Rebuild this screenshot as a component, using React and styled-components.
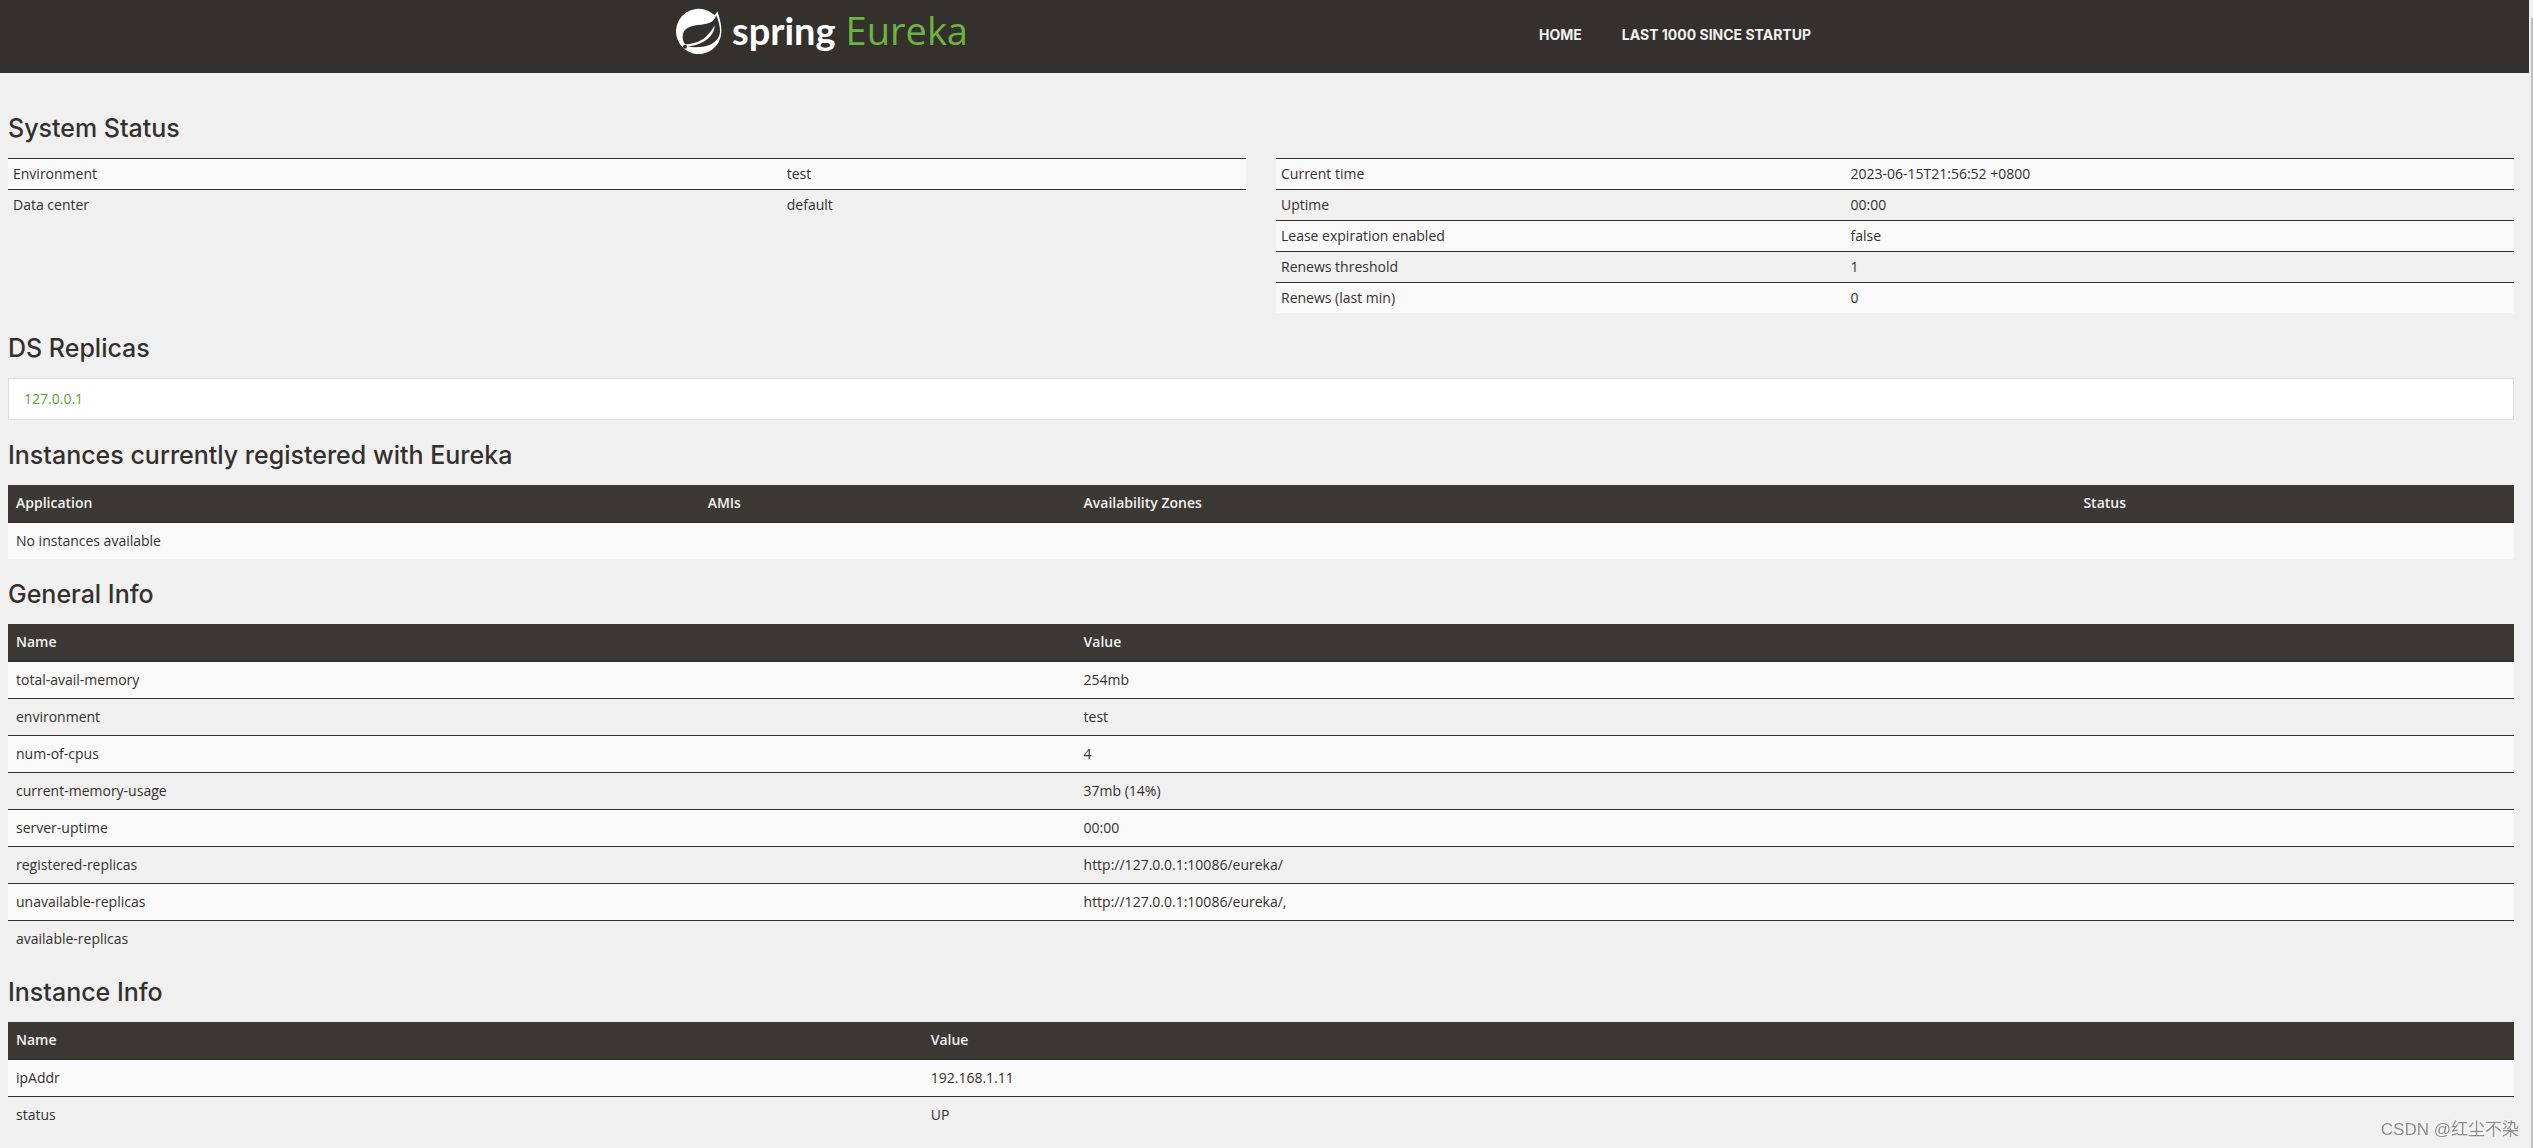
import React from "react";
import styled, { createGlobalStyle } from "styled-components";

const GlobalStyle = createGlobalStyle`
  body {
    margin: 0;
    color: #34302d;
    background: #f0f0f0;
    font: 14px/20px "Open Sans", "Noto Sans", sans-serif;
  }
`;
const Layout = styled.div`
  display: flex;
  min-height: 100vh;
`;
const Page = styled.div`
  flex: 1;
  min-width: 0;
`;
const ScrollRail = styled.div`
  display: flex;
  box-sizing: border-box;
  width: 4px;
  padding: 18px 0 0 2px;
`;
const ScrollThumb = styled.div`
  flex: 1;
  background: #bfbfbf;
`;
const Header = styled.header`
  padding: 0 16px 0 9px;
  background: #34302d;
`;
const HeaderInner = styled.div`
  display: flex;
  justify-content: space-between;
  box-sizing: border-box;
  max-width: 1170px;
  height: 73px;
  margin: 0 auto;
  padding-right: 15px;
`;
const Brand = styled.a`
  display: flex;
  align-items: flex-start;
  padding-top: 8px;
  color: #fff;
  text-decoration: none;
  svg {
    width: 48px;
    height: 48px;
  }
`;
const BrandText = styled.span`
  display: flex;
  align-items: baseline;
  gap: 10px;
  margin-left: 8px;
  line-height: 44px;
`;
const Spring = styled.strong`
  font: bold 38px/44px Lato, sans-serif;
`;
const Eureka = styled.span`
  color: #6db33f;
  font: 38px/44px "Open Sans", sans-serif;
`;
const Nav = styled.nav`
  display: flex;
  a {
    padding: 25px 20px;
    color: #f1f1f1;
    font: bold 14px/20px Inter, sans-serif;
    text-decoration: none;
    text-transform: uppercase;
  }
`;
const Content = styled.main`
  padding: 20px 15px 15px 8px;
`;
const Title = styled.h1`
  margin: 0;
  padding: 23px 0 17px;
  font: 500 25px/25px Inter, sans-serif;
`;
const Columns = styled.div`
  display: grid;
  grid-template-columns: 1fr 1fr;
  gap: 30px;
  align-items: start;
`;
const Table = styled.table`
  width: 100%;
  border-collapse: separate;
  border-spacing: 0;
  table-layout: fixed;
  th,
  td {
    padding: ${({ $condensed }) => ($condensed ? "5px" : "8px")};
    text-align: left;
    vertical-align: top;
  }
  th {
    height: 20px;
    border-bottom: 2px solid #34302d;
    color: #f1f1f1;
    background: #3c3834;
    font-weight: 600;
  }
  td {
    height: 20px;
    border-top: 1px solid #34302d;
  }
  thead + tbody tr:first-child td {
    border-top: 0;
  }
  tbody tr:nth-child(odd) td {
    background: #f9f9f9;
  }
`;
const Col = styled.col`
  width: ${({ $width }) => $width};
`;
const ReplicaList = styled.ul`
  margin: 0;
  padding: 10px 15px;
  border: 1px solid #ddd;
  background: #fff;
  list-style: none;
  a {
    color: #5fa134;
    text-decoration: none;
  }
`;
const Watermark = styled.div`
  position: fixed;
  right: 14px;
  bottom: 6px;
  color: #8c8c8c;
  font: 17px/24px "Liberation Sans", "Noto Sans CJK SC", sans-serif;
  text-shadow: -1px -1px 0 #fff;
`;

const environment = [
  ["Environment", "test"],
  ["Data center", "default"],
];
const status = [
  ["Current time", "2023-06-15T21:56:52 +0800"],
  ["Uptime", "00:00"],
  ["Lease expiration enabled", "false"],
  ["Renews threshold", "1"],
  ["Renews (last min)", "0"],
];
const generalInfo = [
  ["total-avail-memory", "254mb"],
  ["environment", "test"],
  ["num-of-cpus", "4"],
  ["current-memory-usage", "37mb (14%)"],
  ["server-uptime", "00:00"],
  ["registered-replicas", "http://127.0.0.1:10086/eureka/"],
  ["unavailable-replicas", "http://127.0.0.1:10086/eureka/,"],
  ["available-replicas", ""],
];
const instanceInfo = [
  ["ipAddr", "192.168.1.11"],
  ["status", "UP"],
];

function DataTable({ head, rows, widths, label, condensed }) {
  return (
    <Table aria-label={label} $condensed={condensed}>
      <colgroup>
        {widths.map((width, i) => (
          <Col key={i} $width={width} />
        ))}
      </colgroup>
      {head && (
        <thead>
          <tr>
            {head.map((text) => (
              <th key={text} scope="col">{text}</th>
            ))}
          </tr>
        </thead>
      )}
      <tbody>
        {rows.map((row) => (
          <tr key={row[0]}>
            {row.map((text, i) => (
              <td key={i} colSpan={row.length === 1 ? widths.length : undefined}>
                {text}
              </td>
            ))}
          </tr>
        ))}
      </tbody>
    </Table>
  );
}

function Logo() {
  return (
    <svg viewBox="0 0 144 144" aria-hidden="true">
      <path
        fill="#fff"
        d="M124 10C130 28 137 48 136 72A68 68 0 1 1 116 22Q121 17 124 10Z"
      />
      <path
        fill="#34302d"
        d="M121 22C114 42 100 48 75 50C45 52 20 60 20 86C20 97 23 104 28 109C50 108 75 100 90 86C103 73 110 63 116 52C116 78 95 98 70 107C55 112 40 115 32 116C60 119 90 118 108 107C126 96 133 82 132 66C131 50 126 34 121 22Z"
      />
      <circle cx="27" cy="116" r="6" fill="#34302d" />
    </svg>
  );
}

function App() {
  return (
    <Layout>
      <GlobalStyle />
      <Page>
        <Header>
          <HeaderInner>
            <Brand href="#home">
              <Logo />
              <BrandText>
                <Spring>spring</Spring>
                <Eureka>Eureka</Eureka>
              </BrandText>
            </Brand>
            <Nav>
              <a href="#home">Home</a>
              <a href="#lastn">Last 1000 since startup</a>
            </Nav>
          </HeaderInner>
        </Header>
        <Content>
          <Title>System Status</Title>
          <Columns>
            <DataTable
              condensed
              label="Environment"
              widths={["62.5%", "37.5%"]}
              rows={environment}
            />
            <DataTable
              condensed
              label="Status"
              widths={["46%", "54%"]}
              rows={status}
            />
          </Columns>
          <Title>DS Replicas</Title>
          <ReplicaList>
            <li>
              <a href="#replica">127.0.0.1</a>
            </li>
          </ReplicaList>
          <Title>Instances currently registered with Eureka</Title>
          <DataTable
            label="Instances"
            head={["Application", "AMIs", "Availability Zones", "Status"]}
            widths={["27.6%", "15%", "39.9%", "17.5%"]}
            rows={[["No instances available"]]}
          />
          <Title>General Info</Title>
          <DataTable
            label="General info"
            head={["Name", "Value"]}
            widths={["42.6%", "57.4%"]}
            rows={generalInfo}
          />
          <Title>Instance Info</Title>
          <DataTable
            label="Instance info"
            head={["Name", "Value"]}
            widths={["36.5%", "63.5%"]}
            rows={instanceInfo}
          />
        </Content>
      </Page>
      <ScrollRail>
        <ScrollThumb />
      </ScrollRail>
      <Watermark>CSDN @红尘不染</Watermark>
    </Layout>
  );
}

export default App;
